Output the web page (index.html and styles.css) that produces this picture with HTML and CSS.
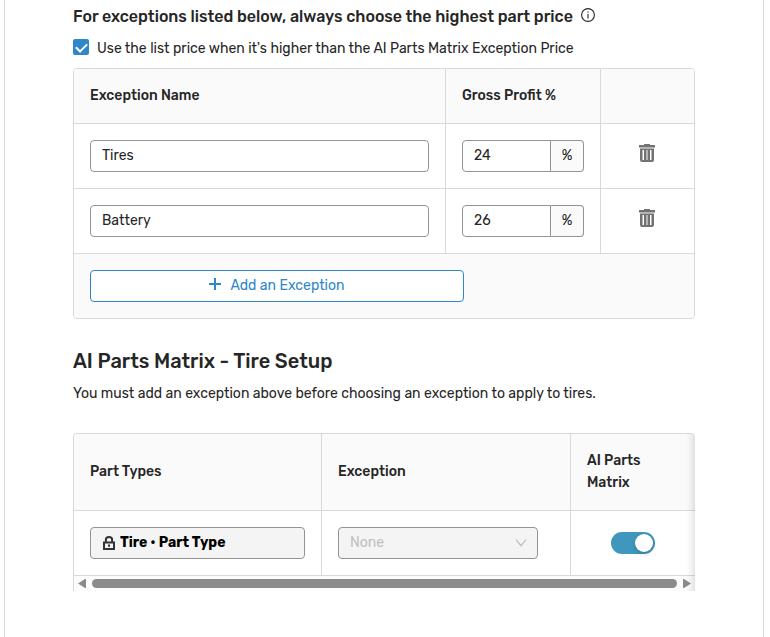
FILE: index.html
```html
<!DOCTYPE html>
<html lang="en">
<head>
    <meta charset="UTF-8">
    <meta name="viewport" content="width=device-width, initial-scale=1.0">
    <title>AI Parts Matrix</title>
    <link rel="stylesheet" href="styles.css">
</head>
<body>
    <main class="panel">
        <section class="exceptions">
            <h3 class="section-label">
                For exceptions listed below, always choose the highest part price
                <svg class="info-icon" viewBox="0 0 14 14" aria-hidden="true">
                    <circle cx="7" cy="7" r="6.4" fill="none" stroke="currentColor" stroke-width="1.1"/>
                    <path d="M7 6v4.4M7 3.6v1.2" stroke="currentColor" stroke-width="1.1"/>
                </svg>
            </h3>
            <label class="check">
                <input type="checkbox" checked>
                <span>Use the list price when it's higher than the AI Parts Matrix Exception Price</span>
            </label>
            <table class="grid exception-table">
                <thead>
                    <tr>
                        <th>Exception Name</th>
                        <th class="profit-col">Gross Profit %</th>
                        <th class="action-col"></th>
                    </tr>
                </thead>
                <tbody>
                    <tr>
                        <td><input class="field" type="text" value="Tires" aria-label="Exception Name"></td>
                        <td>
                            <div class="percent">
                                <input class="field" type="text" value="24" aria-label="Gross Profit %">
                                <span class="addon">%</span>
                            </div>
                        </td>
                        <td class="action">
                            <button class="trash" type="button" aria-label="Delete">
                                <svg viewBox="0 0 16 18"><use href="#trash"/></svg>
                            </button>
                        </td>
                    </tr>
                    <tr>
                        <td><input class="field" type="text" value="Battery" aria-label="Exception Name"></td>
                        <td>
                            <div class="percent">
                                <input class="field" type="text" value="26" aria-label="Gross Profit %">
                                <span class="addon">%</span>
                            </div>
                        </td>
                        <td class="action">
                            <button class="trash" type="button" aria-label="Delete">
                                <svg viewBox="0 0 16 18"><use href="#trash"/></svg>
                            </button>
                        </td>
                    </tr>
                </tbody>
                <tfoot>
                    <tr>
                        <td colspan="3">
                            <button class="add" type="button">
                                <svg viewBox="0 0 12 12" aria-hidden="true"><path d="M6 0v12M0 6h12" stroke="currentColor" stroke-width="2"/></svg>
                                Add an Exception
                            </button>
                        </td>
                    </tr>
                </tfoot>
            </table>
        </section>

        <section class="tire-setup">
            <h2>AI Parts Matrix - Tire Setup</h2>
            <p>You must add an exception above before choosing an exception to apply to tires.</p>
            <div class="scroll-box">
                <table class="grid tire-table">
                    <thead>
                        <tr>
                            <th>Part Types</th>
                            <th class="exception-col">Exception</th>
                            <th class="matrix-col">AI Parts Matrix</th>
                        </tr>
                    </thead>
                    <tbody>
                        <tr>
                            <td>
                                <div class="locked">
                                    <svg viewBox="0 0 12 14" aria-hidden="true">
                                        <path d="M2.9 6V3.6Q2.9 1 6 1T9.1 3.6V6" fill="none" stroke="#333" stroke-width="2"/>
                                        <path d="M1 6.5h10V13H1z" fill="none" stroke="#333" stroke-width="2"/>
                                        <path d="M5 8.6h2v2.2H5z" fill="#333"/>
                                    </svg>
                                    <input type="text" value="Tire • Part Type" aria-label="Part Type" readonly>
                                </div>
                            </td>
                            <td>
                                <div class="select">
                                    <select aria-label="Exception" disabled>
                                        <option>None</option>
                                    </select>
                                    <svg viewBox="0 0 12 8" aria-hidden="true"><path d="M1 .7l5 6 5-6" fill="none" stroke="#bfbfbf" stroke-width="1.2"/></svg>
                                </div>
                            </td>
                            <td class="action"><input class="toggle" type="checkbox" role="switch" aria-label="AI Parts Matrix" checked></td>
                        </tr>
                    </tbody>
                </table>
                <div class="scrollbar">
                    <svg viewBox="0 0 8 9" aria-hidden="true"><path d="M8 0v9H7L0 4.5 7 0z" fill="#8b8b8b"/></svg>
                    <span class="thumb"></span>
                    <svg viewBox="0 0 8 9" aria-hidden="true"><path d="M0 0v9h1l7-4.5L1 0z" fill="#8b8b8b"/></svg>
                </div>
            </div>
        </section>
    </main>

    <svg width="0" height="0" class="defs" aria-hidden="true">
        <symbol id="trash" viewBox="0 0 16 18">
            <path d="M5 0h6v1h5v3H0V1h5z" fill="#737373"/>
            <path d="M0 3h16v1H0z" fill="#b5b5b5"/>
            <path d="M1 4h14v1H1z" fill="#b5b5b5"/>
            <path d="M1 5h14v11q0 2-2 2H3q-2 0-2-2z" fill="#737373"/>
            <path d="M4 6h1v10H4zM11 6h1v10h-1z" fill="#fff"/>
            <path d="M3 6h1v10H3zM7 6h2v10H7zM12 6h1v10h-1z" fill="#b5b5b5"/>
        </symbol>
    </svg>
</body>
</html>
```
FILE: styles.css
```css
* {
    box-sizing: border-box;
    margin: 0;
    padding: 0;
}
body {
    font-family: Rubik, Roboto, "Liberation Sans", sans-serif;
    font-size: 14px;
    line-height: 22px;
    color: #262626;
    background: #fff;
}
input, select, button {
    font: inherit;
    color: inherit;
}
.defs {
    position: absolute;
}
.panel {
    margin: 0 6px 0 4px;
    padding: 5px 68px 46px;
    border: solid #d9d9d9;
    border-width: 0 1px;
}
.section-label {
    display: flex;
    align-items: center;
    gap: 8px;
    font-size: 16px;
    font-weight: 500;
    line-height: 24px;
}
.info-icon {
    width: 14px;
    height: 14px;
    margin-bottom: 4px;
}
.check {
    display: flex;
    align-items: center;
    gap: 8px;
    margin: 9px 0 8px;
}
.check input {
    appearance: none;
    width: 16px;
    height: 16px;
    margin-bottom: 4px;
    border-radius: 2px;
    background: #2f87c9;
    display: grid;
    place-items: center;
}
.check input::after {
    content: "";
    width: 5px;
    height: 9px;
    margin-bottom: 2px;
    border: solid #fff;
    border-width: 0 2px 2px 0;
    transform: rotate(45deg);
}

/* tables */
.grid {
    width: 100%;
    border-collapse: separate;
    border-spacing: 0;
    table-layout: fixed;
}
.grid th, .grid td {
    padding: 16px;
    border-right: 1px solid #d9d9d9;
    border-bottom: 1px solid #d9d9d9;
    vertical-align: middle;
}
.grid th {
    background: #fafafa;
    font-weight: 500;
    text-align: left;
}
.grid tr > :last-child {
    border-right: 0;
}
.exception-table {
    border: 1px solid #d9d9d9;
    border-radius: 4px;
    overflow: hidden;
}
.exception-table tfoot td {
    background: #fafafa;
    border-bottom: 0;
}
.profit-col {
    width: 155px;
}
.action-col {
    width: 93px;
}
.grid .action {
    text-align: center;
}

/* controls */
.field {
    display: block;
    width: 100%;
    height: 32px;
    padding: 0 11px 2px;
    border: 1px solid #949494;
    border-radius: 4px;
    background: #fff;
}
.percent {
    display: flex;
}
.percent .field {
    flex: 1;
    min-width: 0;
    border-radius: 4px 0 0 4px;
}
.addon {
    width: 33px;
    height: 32px;
    line-height: 30px;
    text-align: center;
    border: 1px solid #949494;
    border-left: 0;
    border-radius: 0 4px 4px 0;
    background: #fafafa;
}
.trash {
    padding: 0 2px 6px 0;
    border: 0;
    background: none;
    vertical-align: middle;
    cursor: pointer;
}
.trash svg {
    display: block;
    width: 16px;
    height: 18px;
}
.add {
    display: flex;
    align-items: center;
    justify-content: center;
    gap: 9px;
    width: 374px;
    max-width: 100%;
    height: 32px;
    border: 1px solid #2f87c9;
    border-radius: 4px;
    background: #fff;
    color: #2f87c9;
    cursor: pointer;
}
.add svg {
    width: 12px;
    height: 12px;
    margin-bottom: 4px;
}

/* tire setup */
.tire-setup {
    margin-top: 28px;
}
.tire-setup h2 {
    font-size: 20px;
    font-weight: 500;
    line-height: 28px;
}
.tire-setup p {
    margin: 8px 0 28px;
}
.scroll-box {
    position: relative;
    border: solid #d9d9d9;
    border-width: 1px 0 0 1px;
    border-radius: 4px 4px 0 0;
    overflow: hidden;
}
.scroll-box::after {
    content: "";
    position: absolute;
    inset: 0;
    box-shadow: inset -10px 0 8px -8px rgba(0, 0, 0, .15);
    pointer-events: none;
}
.exception-col {
    width: 249px;
}
.matrix-col {
    width: 124px;
}
.locked {
    display: flex;
    align-items: center;
    gap: 5px;
    height: 32px;
    padding: 0 12px;
    border: 1px solid #949494;
    border-radius: 4px;
    background: #f4f4f4;
}
.locked svg {
    flex: none;
    width: 12px;
    height: 14px;
}
.locked input {
    flex: 1;
    min-width: 0;
    border: 0;
    background: none;
    color: #000;
    font-weight: 700;
}
.select {
    display: grid;
    align-items: center;
    width: 200px;
}
.select select, .select svg {
    grid-area: 1 / 1;
}
.select select {
    appearance: none;
    width: 100%;
    height: 32px;
    padding: 0 11px;
    border: 1px solid #949494;
    border-radius: 4px;
    background: #f4f4f4;
    color: #bfbfbf;
    opacity: 1;
}
.select svg {
    justify-self: end;
    width: 12px;
    height: 8px;
    margin-right: 11px;
}
.toggle {
    appearance: none;
    display: inline-flex;
    justify-content: flex-end;
    width: 44px;
    height: 22px;
    padding: 2px;
    border-radius: 11px;
    background: #3f97bd;
    vertical-align: middle;
}
.toggle::after {
    content: "";
    width: 18px;
    height: 18px;
    border-radius: 50%;
    background: #fff;
    box-shadow: 0 2px 4px rgba(0, 35, 11, .2);
}
.scrollbar {
    display: flex;
    align-items: center;
    gap: 6px;
    height: 15px;
    padding: 0 4px;
    background: #fcfcfc;
}
.scrollbar svg {
    flex: none;
    width: 8px;
    height: 9px;
}
.thumb {
    flex: 1;
    height: 9px;
    border-radius: 5px;
    background: #8b8b8b;
}
```
